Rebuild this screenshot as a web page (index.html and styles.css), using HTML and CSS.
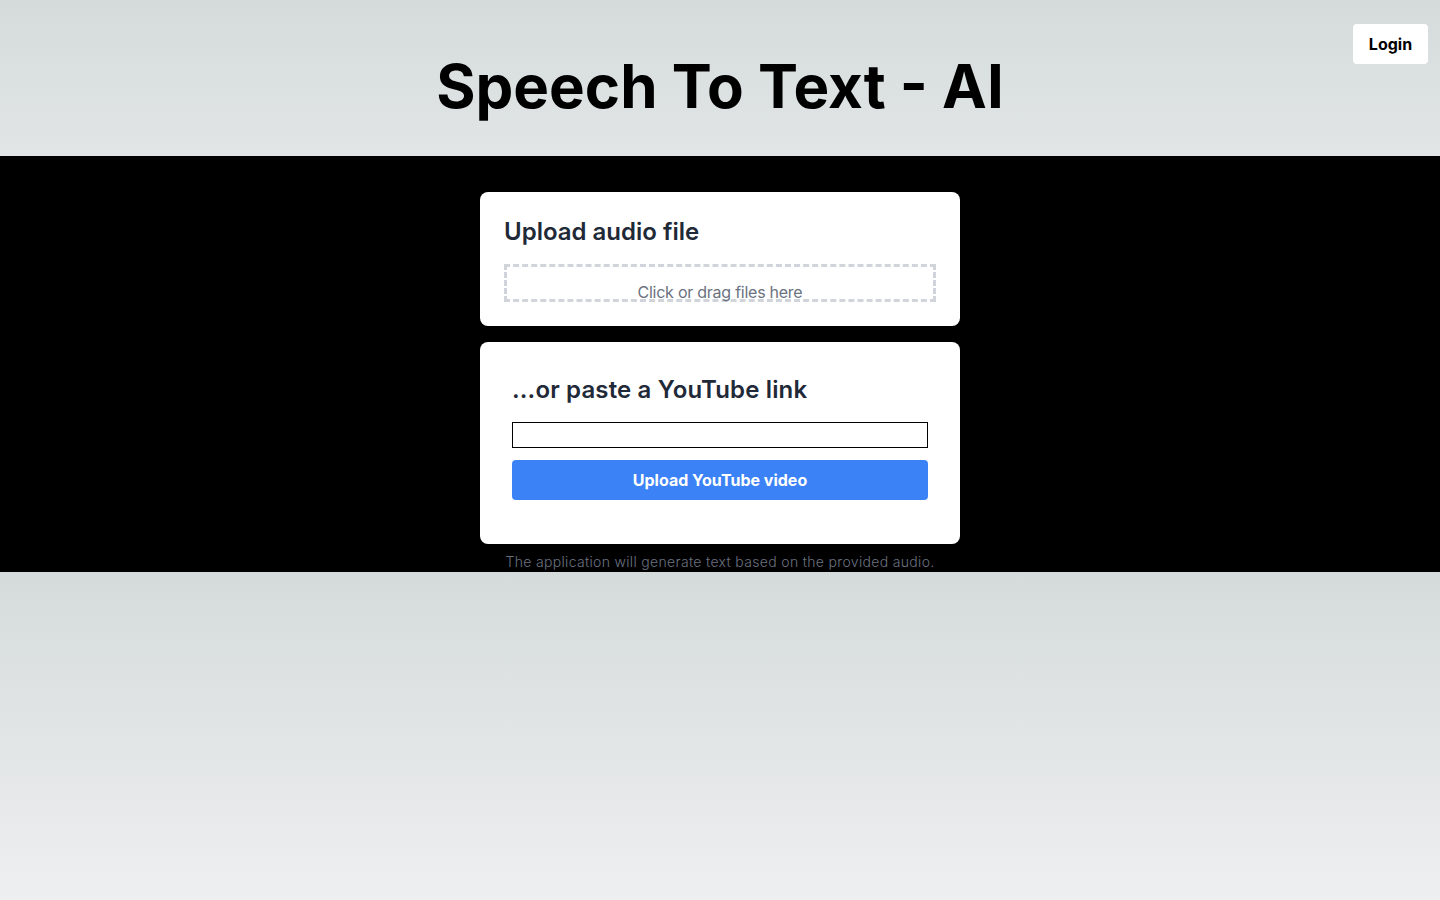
FILE: index.html
```html
<!DOCTYPE html>
<html lang="en">
<head>
<meta charset="utf-8">
<title>Speech To Text - AI</title>
<link rel="stylesheet" href="styles.css">
</head>
<body>
  <header class="site-header">
    <h1 class="site-title">Speech To Text - AI</h1>
    <button class="login-btn" type="button">Login</button>
  </header>
  <main class="stage">
    <section class="card card-upload">
      <h2 class="card-title">Upload audio file</h2>
      <div class="dropzone"><span class="dropzone-text">Click or drag files here</span></div>
    </section>
    <section class="card card-youtube">
      <h2 class="card-title card-title-yt">...or paste a YouTube link</h2>
      <input class="yt-input" type="text" aria-label="YouTube link">
      <button class="yt-btn" type="button">Upload YouTube video</button>
    </section>
    <p class="note">The application will generate text based on the provided audio.</p>
  </main>
  <div class="filler"></div>
</body>
</html>
```
FILE: styles.css
```css
html, body {
  margin: 0;
  padding: 0;
}
body {
  min-height: 100vh;
  display: flex;
  flex-direction: column;
  font-family: Inter, "Noto Sans", "Liberation Sans", sans-serif;
  background: #eeeff0;
}
.site-header {
  position: relative;
  padding: 56px 0 40px;
  text-align: center;
  background: linear-gradient(to bottom, #d5dbdb, #e1e5e5);
}
.site-title {
  margin: 0;
  font-size: 60px;
  line-height: 60px;
  font-weight: 700;
  color: #000;
  letter-spacing: 0;
}
.login-btn {
  position: absolute;
  top: 24px;
  right: 12px;
  width: 75px;
  height: 40px;
  border: 0;
  border-radius: 4px;
  background: #fff;
  color: #000;
  font-family: inherit;
  font-size: 16px;
  font-weight: 700;
  padding: 0;
  cursor: pointer;
}
.stage {
  background: #000;
  padding-top: 36px;
  display: flex;
  flex-direction: column;
  align-items: center;
}
.card {
  width: 480px;
  box-sizing: border-box;
  background: #fff;
  border-radius: 8px;
}
.card-upload {
  padding: 24px;
}
.card-youtube {
  margin-top: 16px;
  padding: 32px 32px 44px;
  display: flex;
  flex-direction: column;
}
.card-title {
  margin: 0;
  font-size: 24px;
  line-height: 32px;
  font-weight: 600;
  color: #1f2937;
}
.card-title-yt {
  letter-spacing: 0.15px;
}
.dropzone {
  margin-top: 16px;
  height: 38px;
  box-sizing: border-box;
  border: 3px dashed #d1d5db;
  padding-top: 13px;
  text-align: center;
  clip-path: inset(0);
}
.dropzone-text {
  display: block;
  font-size: 16px;
  line-height: 24px;
  letter-spacing: -0.25px;
  color: #6b7280;
}
.yt-input {
  margin: 16px 0 0;
  height: 26px;
  box-sizing: border-box;
  border: 1px solid #000;
  border-radius: 0;
  padding: 0 4px;
  font-family: inherit;
  font-size: 14px;
  background: #fff;
}
.yt-btn {
  margin-top: 12px;
  height: 40px;
  border: 0;
  border-radius: 4px;
  background: #3b82f6;
  color: #fff;
  font-family: inherit;
  font-size: 16px;
  font-weight: 700;
  cursor: pointer;
}
.note {
  margin: 8px 0 0;
  font-size: 14px;
  line-height: 20px;
  font-weight: 300;
  letter-spacing: 0.33px;
  color: #6b7280;
}
.filler {
  flex: 1;
  background: linear-gradient(to bottom, #d5dbdb, #eeeff0);
}
```
